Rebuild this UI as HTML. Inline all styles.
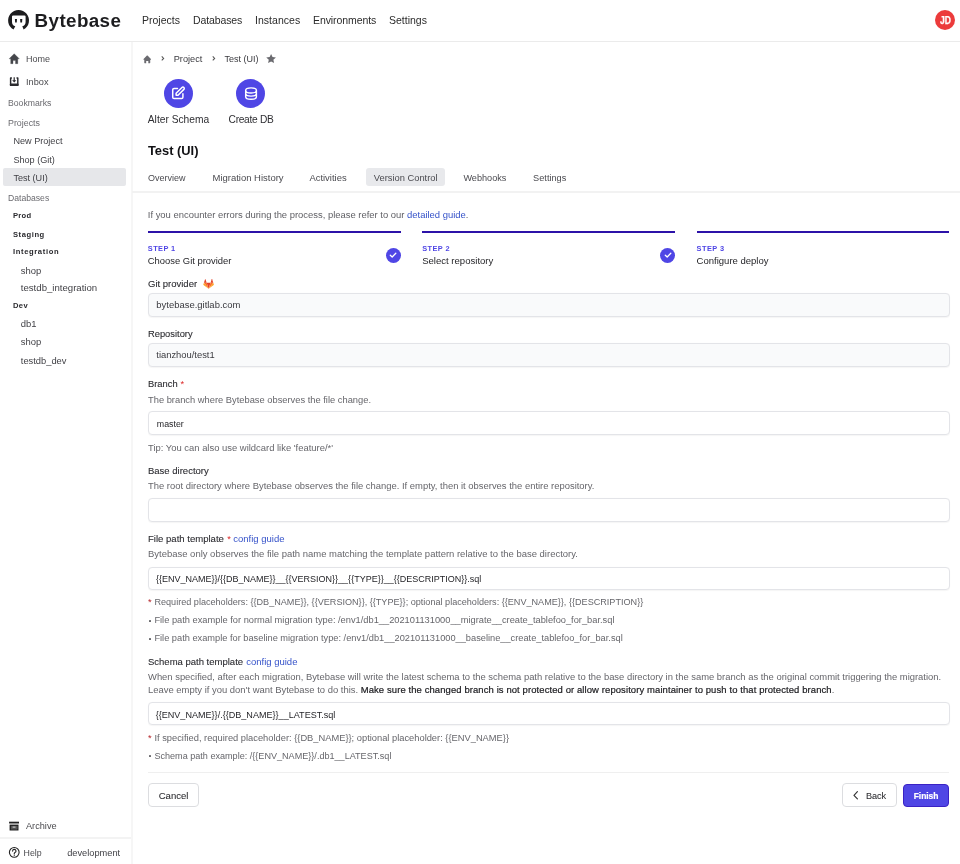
<!DOCTYPE html>
<html><head><meta charset="utf-8"><style>
html{background:#fff;}
html,body{margin:0;padding:0;width:960px;height:864px;overflow:hidden;position:relative;font-family:"Liberation Sans",sans-serif;}
body{will-change:transform;background:transparent;}
.t{position:absolute;white-space:nowrap;line-height:20px;}
svg{position:absolute;overflow:visible}
</style></head><body>
<div style="position:absolute;left:0px;top:41px;width:960px;height:1px;background:#ebebeb"></div>
<svg style="left:0;top:0" width="40" height="40" viewBox="0 0 40 40">
<path fill-rule="evenodd" d="M13.5 29.6 A10.45 10.45 0 1 1 23.6 29.6 L22.3 26.3 Q25.6 25.3 25.6 22 L25.6 16.6 Q25.6 15.4 24.4 15.4 L13.2 15.4 Q12 15.4 12 16.6 L12 22 Q12 25.3 15.3 26.3 Z" fill="#1d1d1f"/>
<path d="M14.9 19.1h2.1l-0.25 3.5h-1.6z M20.1 19.1h2.2l-0.25 3.5h-1.7z" fill="#1d1d1f"/>
</svg><div class="t " style="left:34.6px;top:11.24px;font-size:18.8px;color:#1d1d1f;font-weight:700;letter-spacing:0.4px">Bytebase</div>
<div class="t " style="left:142px;top:9.96px;font-size:10.5px;color:#2b2b2b;font-weight:400;letter-spacing:0px">Projects</div>
<div class="t " style="left:193px;top:9.96px;font-size:10.5px;color:#2b2b2b;font-weight:400;letter-spacing:-0.12px">Databases</div>
<div class="t " style="left:255px;top:9.96px;font-size:10.5px;color:#2b2b2b;font-weight:400;letter-spacing:0.03px">Instances</div>
<div class="t " style="left:313px;top:9.96px;font-size:10.5px;color:#2b2b2b;font-weight:400;letter-spacing:-0.09px">Environments</div>
<div class="t " style="left:389px;top:9.96px;font-size:10.5px;color:#2b2b2b;font-weight:400;letter-spacing:0px">Settings</div>
<div style="position:absolute;left:935px;top:10.3px;width:20.200000000000045px;height:20.2px;background:#ec3b3b;border-radius:50%"></div>
<div class="t " style="left:939.5px;top:10.57px;font-size:10.2px;color:#fff;font-weight:700;transform:scaleX(0.84);transform-origin:0 50%;letter-spacing:-0.1px;-webkit-text-stroke:0.25px #fff">JD</div>
<div style="position:absolute;left:130.5px;top:42px;width:2.5px;height:822px;background:#f6f6f6"></div>
<svg style="left:0;top:0" width="40" height="100" viewBox="0 0 40 100"><path d="M14.2 53.7 L19.3 58.8 H17.8 V63.7 H15.5 V60.6 H13 V63.7 H10.7 V58.8 H9.1 Z" fill="#44464b" stroke="#44464b" stroke-width="0.3" stroke-linejoin="round"/>
<path d="M11.9 78 H10.6 V85.2 H17.8 V78 H16.5" fill="none" stroke="#2a2a2e" stroke-width="1.45" stroke-linejoin="round"/><rect x="9.9" y="83.6" width="8.6" height="2.3" rx="0.6" fill="#2a2a2e"/><path d="M14.2 77.3 V81" stroke="#2a2a2e" stroke-width="1.2"/><path d="M12.1 80.2 H16.3 L14.2 82.6 Z" fill="#2a2a2e"/></svg><div class="t " style="left:26px;top:49.28px;font-size:9.0px;color:#4b4b4f;font-weight:400;">Home</div>
<div class="t " style="left:26px;top:72.41px;font-size:9.2px;color:#4b4b4f;font-weight:400;">Inbox</div>
<div class="t " style="left:8px;top:93.09px;font-size:8.68px;color:#6b6b70;font-weight:400;">Bookmarks</div>
<div class="t " style="left:8px;top:113.43px;font-size:8.85px;color:#6b6b70;font-weight:400;">Projects</div>
<div class="t " style="left:13.4px;top:131.44px;font-size:9.12px;color:#3f3f44;font-weight:400;">New Project</div>
<div class="t " style="left:13.4px;top:149.64px;font-size:9.12px;color:#3f3f44;font-weight:400;">Shop (Git)</div>
<div style="position:absolute;left:3px;top:168.3px;width:122.6px;height:17.299999999999983px;background:#e6e7ea;border-radius:2px"></div>
<div class="t " style="left:13.4px;top:167.75px;font-size:9.1px;color:#3f3f44;font-weight:400;">Test (UI)</div>
<div class="t " style="left:8px;top:188.25px;font-size:8.65px;color:#6b6b70;font-weight:400;">Databases</div>
<div class="t " style="left:12.95px;top:206.17px;font-size:7.6px;color:#2a2a2e;font-weight:700;letter-spacing:0.33px">Prod</div>
<div class="t " style="left:12.95px;top:224.67px;font-size:7.6px;color:#2a2a2e;font-weight:700;letter-spacing:0.58px">Staging</div>
<div class="t " style="left:12.95px;top:242.47px;font-size:7.6px;color:#2a2a2e;font-weight:700;letter-spacing:0.64px">Integration</div>
<div class="t " style="left:12.95px;top:296.37px;font-size:7.6px;color:#2a2a2e;font-weight:700;letter-spacing:0.45px">Dev</div>
<div class="t " style="left:20.8px;top:260.63px;font-size:9.45px;color:#3f3f44;font-weight:400;">shop</div>
<div class="t " style="left:20.8px;top:278.17px;font-size:9.62px;color:#3f3f44;font-weight:400;">testdb_integration</div>
<div class="t " style="left:20.8px;top:314.43px;font-size:9.45px;color:#3f3f44;font-weight:400;">db1</div>
<div class="t " style="left:20.8px;top:332.23px;font-size:9.45px;color:#3f3f44;font-weight:400;">shop</div>
<div class="t " style="left:20.8px;top:350.67px;font-size:9.33px;color:#3f3f44;font-weight:400;">testdb_dev</div>
<svg style="left:0;top:800px" width="40" height="64" viewBox="0 800 40 64"><rect x="9.1" y="821.7" width="9.9" height="1.8" fill="#222"/><rect x="10.3" y="825.3" width="7.5" height="4.5" fill="none" stroke="#222" stroke-width="1.4"/><rect x="10.9" y="825.9" width="6.3" height="3.3" fill="#555"/><rect x="12.6" y="826.6" width="2.9" height="1" fill="#ddd"/></svg><div class="t " style="left:26px;top:816.42px;font-size:9.18px;color:#4b4b4f;font-weight:400;">Archive</div>
<div style="position:absolute;left:0px;top:837px;width:131px;height:2px;background:#f3f3f3"></div>
<svg style="left:0;top:800px" width="40" height="64" viewBox="0 800 40 64"><circle cx="14.25" cy="852.35" r="4.85" fill="none" stroke="#222" stroke-width="1.1"/><path d="M12.6 851.1a1.7 1.7 0 1 1 2.4 1.5c-.45.25-.75.6-.75 1.1v.35" fill="none" stroke="#222" stroke-width="1.1" stroke-linecap="round"/><circle cx="14.25" cy="855.3" r="0.6" fill="#222"/></svg><div class="t " style="left:23.6px;top:843.05px;font-size:8.8px;color:#4b4b4f;font-weight:400;">Help</div>
<div class="t " style="left:67.2px;top:842.89px;font-size:9.25px;color:#3f3f44;font-weight:400;">development</div>
<svg style="left:142.9px;top:54.5px" width="8.5" height="8.2" viewBox="0 0 20 19"><path d="M10.7 1.3a1 1 0 0 0-1.4 0l-8 8A1 1 0 0 0 2 11h1v7a1 1 0 0 0 1 1h3.5v-5h5v5H16a1 1 0 0 0 1-1v-7h1a1 1 0 0 0 .7-1.7z" fill="#6b6b70"/></svg><svg style="left:161.2px;top:56.2px" width="3.4" height="4.8" viewBox="0 0 4 6"><path d="M0.8 0.6L3.2 3L0.8 5.4" fill="none" stroke="#555" stroke-width="1.3"/></svg><div class="t " style="left:173.75px;top:49.22px;font-size:9.19px;color:#3a3a3f;font-weight:400;">Project</div>
<svg style="left:211.9px;top:56.2px" width="3.4" height="4.8" viewBox="0 0 4 6"><path d="M0.8 0.6L3.2 3L0.8 5.4" fill="none" stroke="#555" stroke-width="1.3"/></svg><div class="t " style="left:224.4px;top:49.28px;font-size:9.0px;color:#3a3a3f;font-weight:400;">Test (UI)</div>
<svg style="left:265.8px;top:53.5px" width="10.2" height="9.4" viewBox="0 0 20 19"><path d="M10 0l2.9 6.3 6.9.7-5.2 4.6 1.5 6.8L10 15l-6.1 3.4 1.5-6.8L.2 7l6.9-.7z" fill="#6b6b70"/></svg><div style="position:absolute;left:163.75px;top:78.75px;width:29.599999999999994px;height:29.599999999999994px;background:#4f46e5;border-radius:50%"></div>
<div style="position:absolute;left:235.75px;top:78.75px;width:29.600000000000023px;height:29.599999999999994px;background:#4f46e5;border-radius:50%"></div>
<svg style="left:170.46px;top:85.3px" width="16.32" height="16.32" viewBox="0 0 24 24" fill="none" stroke="#fff" stroke-width="2.2" stroke-linecap="round" stroke-linejoin="round"><path d="M11 5H6a2 2 0 0 0-2 2v11a2 2 0 0 0 2 2h11a2 2 0 0 0 2-2v-5m-1.414-9.414a2 2 0 1 1 2.828 2.828L11.828 15H9v-2.828l8.586-8.586z"/></svg><svg style="left:242.7px;top:85.75px" width="16.08" height="15.2" viewBox="0 0 24 24" preserveAspectRatio="none" fill="none" stroke="#fff" stroke-width="2.15" stroke-linecap="round" stroke-linejoin="round"><path d="M4 7v10c0 2.21 3.582 4 8 4s8-1.79 8-4V7M4 7c0 2.21 3.582 4 8 4s8-1.79 8-4M4 7c0-2.21 3.582-4 8-4s8 1.79 8 4m0 5c0 2.21-3.582 4-8 4s-8-1.79-8-4"/></svg><div class="t " style="left:147.8px;top:109.76px;font-size:10.23px;color:#2f2f33;font-weight:400;">Alter Schema</div>
<div class="t " style="left:228.6px;top:109.77px;font-size:10.2px;color:#2f2f33;font-weight:400;letter-spacing:-0.3px">Create DB</div>
<div class="t " style="left:147.9px;top:140.63px;font-size:12.9px;color:#111114;font-weight:700;">Test (UI)</div>
<div style="position:absolute;left:365.6px;top:167.8px;width:79.09999999999997px;height:17.799999999999983px;background:#e8e9ec;border-radius:3px"></div>
<div class="t " style="left:147.9px;top:167.98px;font-size:9.0px;color:#4b4b50;font-weight:400;">Overview</div>
<div class="t " style="left:212.5px;top:167.82px;font-size:9.47px;color:#4b4b50;font-weight:400;">Migration History</div>
<div class="t " style="left:309.4px;top:167.83px;font-size:9.45px;color:#4b4b50;font-weight:400;">Activities</div>
<div class="t " style="left:373.75px;top:167.86px;font-size:9.34px;color:#4b4b50;font-weight:400;">Version Control</div>
<div class="t " style="left:463.4px;top:167.94px;font-size:9.13px;color:#4b4b50;font-weight:400;">Webhooks</div>
<div class="t " style="left:533.1px;top:167.91px;font-size:9.2px;color:#4b4b50;font-weight:400;">Settings</div>
<div style="position:absolute;left:132px;top:191px;width:828px;height:1.5px;background:#f2f2f2"></div>
<div class="t " style="left:147.8px;top:204.93px;font-size:9.43px;color:#5f5f64;font-weight:400;">If you encounter errors during the process, please refer to our <span style="color:#3552c9">detailed guide</span>.</div>
<div style="position:absolute;left:147.8px;top:231px;width:253.2px;height:2px;background:#2c12a8"></div>
<div style="position:absolute;left:422.2px;top:231px;width:253.2px;height:2px;background:#2c12a8"></div>
<div style="position:absolute;left:696.6px;top:231px;width:252.60000000000002px;height:2px;background:#2c12a8"></div>
<div class="t " style="left:147.8px;top:239.24px;font-size:7.4px;color:#4f46e5;font-weight:700;letter-spacing:0.42px">STEP 1</div>
<div class="t " style="left:147.8px;top:250.94px;font-size:9.42px;color:#1f1f23;font-weight:400;">Choose Git provider</div>
<div class="t " style="left:422.2px;top:239.24px;font-size:7.4px;color:#4f46e5;font-weight:700;letter-spacing:0.42px">STEP 2</div>
<div class="t " style="left:422.2px;top:250.89px;font-size:9.55px;color:#1f1f23;font-weight:400;">Select repository</div>
<div class="t " style="left:696.6px;top:239.24px;font-size:7.4px;color:#4f46e5;font-weight:700;letter-spacing:0.42px">STEP 3</div>
<div class="t " style="left:696.6px;top:250.90px;font-size:9.52px;color:#1f1f23;font-weight:400;">Configure deploy</div>
<div style="position:absolute;left:385.7px;top:247.6px;width:15.200000000000045px;height:15.200000000000017px;background:#4f46e5;border-radius:50%"></div>
<svg style="left:389.3px;top:251.2px" width="8" height="8" viewBox="0 0 8 8"><path d="M1.3 4.2L3.2 6L6.8 2.2" fill="none" stroke="#fff" stroke-width="1.3" stroke-linecap="round" stroke-linejoin="round"/></svg>
<div style="position:absolute;left:660.0px;top:247.6px;width:15.200000000000045px;height:15.200000000000017px;background:#4f46e5;border-radius:50%"></div>
<svg style="left:663.6px;top:251.2px" width="8" height="8" viewBox="0 0 8 8"><path d="M1.3 4.2L3.2 6L6.8 2.2" fill="none" stroke="#fff" stroke-width="1.3" stroke-linecap="round" stroke-linejoin="round"/></svg>
<div class="t " style="left:148px;top:273.91px;font-size:9.5px;color:#2b2b30;font-weight:400;-webkit-text-stroke:0.1px #2b2b30">Git provider</div>
<svg style="left:203px;top:278.7px" width="11.2" height="9.7" viewBox="0 0 24 22"><path d="M12 22L16.4 8.4H7.6z" fill="#e24329"/><path d="M12 22L7.6 8.4H1.4z" fill="#fc6d26"/><path d="M1.4 8.4L.1 12.5a.9.9 0 0 0 .3 1L12 22z" fill="#fca326"/><path d="M1.4 8.4h6.2L4.9.3a.5.5 0 0 0-.9 0z" fill="#e24329"/><path d="M12 22L16.4 8.4h6.2z" fill="#fc6d26"/><path d="M22.6 8.4l1.3 4.1a.9.9 0 0 1-.3 1L12 22z" fill="#fca326"/><path d="M22.6 8.4h-6.2L19.1.3a.5.5 0 0 1 .9 0z" fill="#e24329"/></svg><div style="position:absolute;left:148px;top:292.7px;width:802px;height:24.600000000000023px;background:#f9fafb;border:1px solid #e3e4e8;border-radius:4px;box-sizing:border-box;box-shadow:0 0.5px 1px rgba(0,0,0,0.04)"></div>
<div class="t " style="left:156.3px;top:295.22px;font-size:9.46px;color:#3a3a3f;font-weight:400;">bytebase.gitlab.com</div>
<div class="t " style="left:148px;top:323.97px;font-size:9.33px;color:#2b2b30;font-weight:400;-webkit-text-stroke:0.1px #2b2b30">Repository</div>
<div style="position:absolute;left:148px;top:343px;width:802px;height:24.399999999999977px;background:#f9fafb;border:1px solid #e3e4e8;border-radius:4px;box-sizing:border-box;box-shadow:0 0.5px 1px rgba(0,0,0,0.04)"></div>
<div class="t " style="left:156.3px;top:345.44px;font-size:9.4px;color:#3a3a3f;font-weight:400;">tianzhou/test1</div>
<div class="t " style="left:148px;top:374.06px;font-size:9.35px;color:#2b2b30;font-weight:400;-webkit-text-stroke:0.1px #2b2b30">Branch</div>
<div class="t " style="left:180.4px;top:374.04px;font-size:9.4px;color:#dc2626;font-weight:400;">*</div>
<div class="t " style="left:148px;top:389.77px;font-size:9.33px;color:#66666b;font-weight:400;">The branch where Bytebase observes the file change.</div>
<div style="position:absolute;left:148px;top:411.4px;width:802px;height:24.100000000000023px;background:#fff;border:1px solid #e3e4e8;border-radius:4px;box-sizing:border-box;box-shadow:0 0.5px 1px rgba(0,0,0,0.04)"></div>
<div class="t " style="left:156.8px;top:413.74px;font-size:8.82px;color:#1f1f23;font-weight:400;">master</div>
<div class="t " style="left:148px;top:437.63px;font-size:9.43px;color:#66666b;font-weight:400;">Tip: You can also use wildcard like 'feature/*'</div>
<div class="t " style="left:148px;top:461.41px;font-size:9.5px;color:#2b2b30;font-weight:400;-webkit-text-stroke:0.1px #2b2b30">Base directory</div>
<div class="t " style="left:148px;top:476.43px;font-size:9.44px;color:#66666b;font-weight:400;">The root directory where Bytebase observes the file change. If empty, then it observes the entire repository.</div>
<div style="position:absolute;left:148px;top:498px;width:802px;height:24px;background:#fff;border:1px solid #e3e4e8;border-radius:4px;box-sizing:border-box;box-shadow:0 0.5px 1px rgba(0,0,0,0.04)"></div>
<div class="t " style="left:148px;top:529.19px;font-size:9.55px;color:#2b2b30;font-weight:400;-webkit-text-stroke:0.1px #2b2b30">File path template</div>
<div class="t " style="left:227.2px;top:529.24px;font-size:9.4px;color:#dc2626;font-weight:400;">*</div>
<div class="t " style="left:233.3px;top:529.21px;font-size:9.5px;color:#3552c9;font-weight:400;">config guide</div>
<div class="t " style="left:148px;top:544.22px;font-size:9.47px;color:#66666b;font-weight:400;">Bytebase only observes the file path name matching the template pattern relative to the base directory.</div>
<div style="position:absolute;left:148px;top:566.9px;width:802px;height:23.300000000000068px;background:#fff;border:1px solid #e3e4e8;border-radius:4px;box-sizing:border-box;box-shadow:0 0.5px 1px rgba(0,0,0,0.04)"></div>
<div class="t " style="left:156px;top:569.18px;font-size:9.01px;color:#1f1f23;font-weight:400;">{{ENV_NAME}}/{{DB_NAME}}__{{VERSION}}__{{TYPE}}__{{DESCRIPTION}}.sql</div>
<div class="t " style="left:148.1px;top:592.04px;font-size:9.4px;color:#b42328;font-weight:400;">*</div>
<div class="t " style="left:154.4px;top:592.15px;font-size:9.1px;color:#66666b;font-weight:400;">Required placeholders: {{DB_NAME}}, {{VERSION}}, {{TYPE}}; optional placeholders: {{ENV_NAME}}, {{DESCRIPTION}}</div>
<div style="position:absolute;left:149.1px;top:620.0px;width:1.700000000000017px;height:1.7000000000000455px;background:#6a6a6e;border-radius:0.5px"></div>
<div class="t " style="left:154.4px;top:610.28px;font-size:9.29px;color:#66666b;font-weight:400;">File path example for normal migration type: /env1/db1__202101131000__migrate__create_tablefoo_for_bar.sql</div>
<div style="position:absolute;left:149.1px;top:638.3px;width:1.700000000000017px;height:1.7000000000000455px;background:#6a6a6e;border-radius:0.5px"></div>
<div class="t " style="left:154.4px;top:628.19px;font-size:9.25px;color:#66666b;font-weight:400;">File path example for baseline migration type: /env1/db1__202101131000__baseline__create_tablefoo_for_bar.sql</div>
<div class="t " style="left:148px;top:652.11px;font-size:9.5px;color:#2b2b30;font-weight:400;-webkit-text-stroke:0.1px #2b2b30">Schema path template</div>
<div class="t " style="left:246.2px;top:652.11px;font-size:9.5px;color:#3552c9;font-weight:400;">config guide</div>
<div class="t " style="left:148px;top:667.04px;font-size:9.42px;color:#66666b;font-weight:400;">When specified, after each migration, Bytebase will write the latest schema to the schema path relative to the base directory in the same branch as the original commit triggering the migration.</div>
<div class="t " style="left:148px;top:680.03px;font-size:9.45px;color:#66666b;font-weight:400;">Leave empty if you don't want Bytebase to do this. <span style="color:#1a1a1e;-webkit-text-stroke:0.2px #1a1a1e;letter-spacing:0.11px">Make sure the changed branch is not protected or allow repository maintainer to push to that protected branch</span>.</div>
<div style="position:absolute;left:148px;top:701.5px;width:802px;height:23.799999999999955px;background:#fff;border:1px solid #e3e4e8;border-radius:4px;box-sizing:border-box;box-shadow:0 0.5px 1px rgba(0,0,0,0.04)"></div>
<div class="t " style="left:155.7px;top:704.56px;font-size:9.07px;color:#1f1f23;font-weight:400;">{{ENV_NAME}}/.{{DB_NAME}}__LATEST.sql</div>
<div class="t " style="left:148.1px;top:727.94px;font-size:9.4px;color:#b42328;font-weight:400;">*</div>
<div class="t " style="left:154.4px;top:727.97px;font-size:9.32px;color:#66666b;font-weight:400;">If specified, required placeholder: {{DB_NAME}}; optional placeholder: {{ENV_NAME}}</div>
<div style="position:absolute;left:149.1px;top:755.3px;width:1.700000000000017px;height:1.7000000000000455px;background:#6a6a6e;border-radius:0.5px"></div>
<div class="t " style="left:154.4px;top:745.65px;font-size:9.08px;color:#66666b;font-weight:400;">Schema path example: /{{ENV_NAME}}/.db1__LATEST.sql</div>
<div style="position:absolute;left:147.5px;top:772px;width:801.7px;height:1.2000000000000455px;background:#efefef"></div>
<div style="position:absolute;left:147.5px;top:783.3px;width:51.19999999999999px;height:24.200000000000045px;background:#fff;border:1px solid #dcdde0;border-radius:4px;box-sizing:border-box"></div>
<div class="t " style="left:158.7px;top:785.88px;font-size:9.57px;color:#2f2f33;font-weight:400;-webkit-text-stroke:0.08px #2f2f33">Cancel</div>
<div style="position:absolute;left:841.5px;top:783.3px;width:55.5px;height:24.100000000000023px;background:#fff;border:1px solid #dcdde0;border-radius:4px;box-sizing:border-box"></div>
<svg style="left:853.3px;top:791.4px" width="5.4" height="8.6" viewBox="0 0 6 10"><path d="M5 0.8L1 5l4 4.2" fill="none" stroke="#333" stroke-width="1.35" stroke-linecap="round" stroke-linejoin="round"/></svg><div class="t " style="left:865.9px;top:786.23px;font-size:9.15px;color:#2f2f33;font-weight:400;-webkit-text-stroke:0.08px #2f2f33">Back</div>
<div style="position:absolute;left:903.1px;top:783.7px;width:46.10000000000002px;height:23.699999999999932px;background:#4f46e5;border:1px solid #3a22c4;box-sizing:border-box;border-radius:4px"></div>
<div class="t " style="left:913.7px;top:786.45px;font-size:8.5px;color:#fff;font-weight:700;letter-spacing:-0.05px;-webkit-text-stroke:0.2px #fff">Finish</div>
</body></html>
